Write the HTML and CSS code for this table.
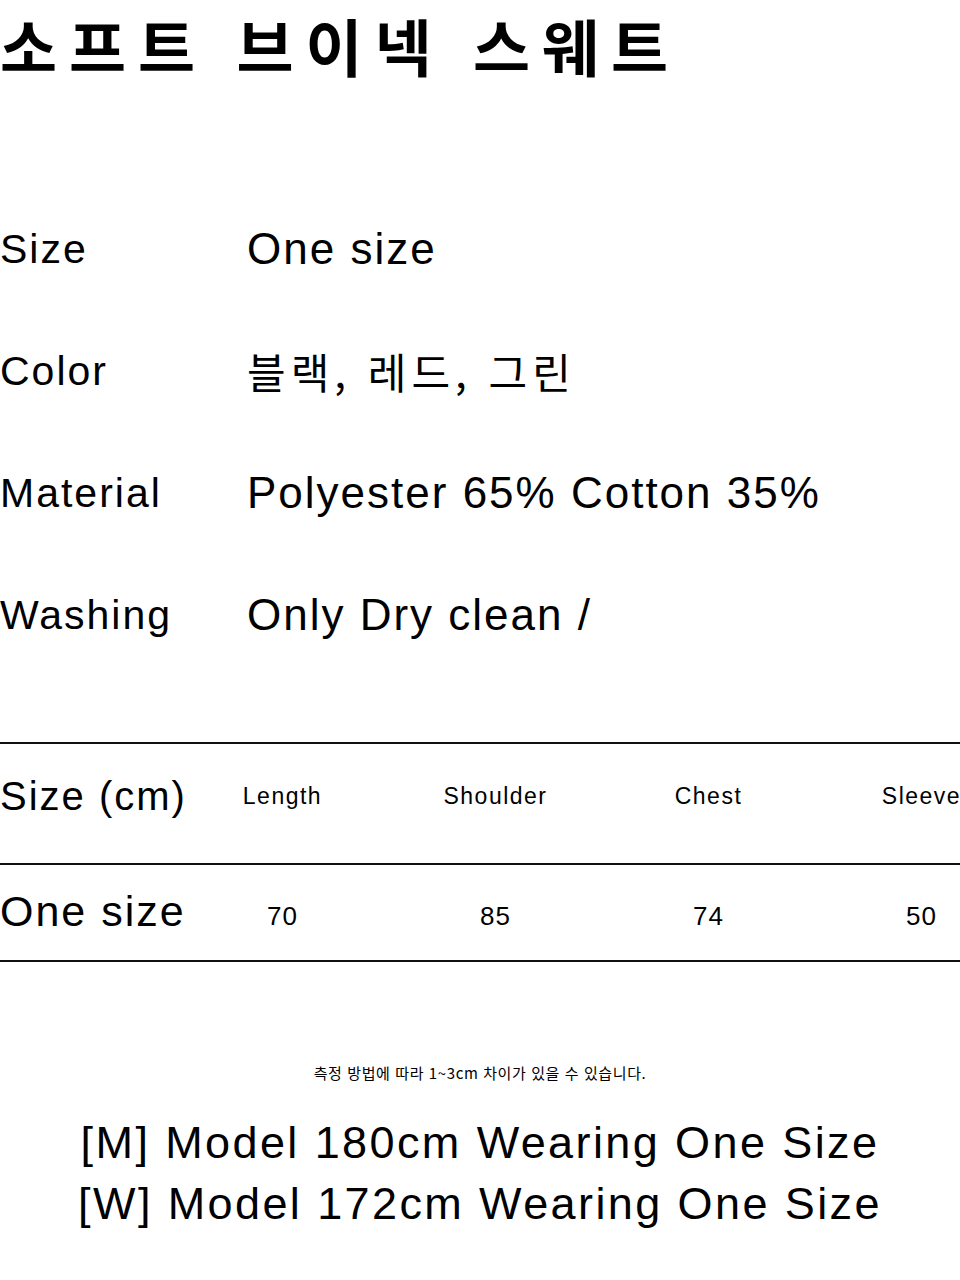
FILE: index.html
```html
<!DOCTYPE html>
<html lang="ko">
<head>
<meta charset="utf-8">
<title>소프트 브이넥 스웨트</title>
<link rel="stylesheet" href="styles.css">
</head>
<body>
<main class="page">
  <h1 class="title">소프트 브이넥 스웨트</h1>

  <dl class="specs">
    <div class="spec-row"><dt>Size</dt><dd>One size</dd></div>
    <div class="spec-row"><dt>Color</dt><dd class="ko">블랙, 레드, 그린</dd></div>
    <div class="spec-row"><dt>Material</dt><dd>Polyester 65% Cotton 35%</dd></div>
    <div class="spec-row"><dt>Washing</dt><dd>Only Dry clean /</dd></div>
  </dl>

  <div class="size-table">
    <div class="size-row size-head">
      <div class="cell-label">Size (cm)</div>
      <div class="cell">Length</div>
      <div class="cell">Shoulder</div>
      <div class="cell">Chest</div>
      <div class="cell">Sleeve</div>
    </div>
    <div class="size-row size-data">
      <div class="cell-label">One size</div>
      <div class="cell">70</div>
      <div class="cell">85</div>
      <div class="cell">74</div>
      <div class="cell">50</div>
    </div>
  </div>

  <p class="note">측정 방법에 따라 1~3cm 차이가 있을 수 있습니다.</p>

  <div class="models">
    <p class="model-line">[M] Model 180cm Wearing One Size</p>
    <p class="model-line">[W] Model 172cm Wearing One Size</p>
  </div>
</main>
</body>
</html>
```

FILE: styles.css
```css
html, body {
  margin: 0;
  padding: 0;
  background: #fff;
}

body {
  width: 960px;
  overflow-x: hidden;
  color: #000;
  font-family: "Liberation Sans", "Noto Sans CJK KR", sans-serif;
}

.page {
  display: flex;
  flex-direction: column;
}

.title {
  margin: 0;
  height: 90px;
  line-height: 90px;
  font-family: "Noto Sans CJK KR", sans-serif;
  font-weight: 700;
  font-size: 62px;
  letter-spacing: 12px;
  white-space: nowrap;
}

.specs {
  margin: 134px 0 0;
  display: flex;
  flex-direction: column;
  gap: 72px;
}

.spec-row {
  display: grid;
  grid-template-columns: 247px 1fr;
  height: 50px;
  align-items: center;
}

.spec-row dt {
  font-size: 41px;
  letter-spacing: 2px;
  line-height: 50px;
}

.spec-row dd {
  margin: 0;
  font-size: 44px;
  letter-spacing: 2px;
  line-height: 50px;
  white-space: nowrap;
}

.spec-row dd.ko {
  font-family: "Noto Sans CJK KR", sans-serif;
  font-size: 42px;
  letter-spacing: 5px;
}

.size-table {
  margin-top: 102px;
  width: 960px;
  overflow: hidden;
  border-top: 2px solid #111;
}

.size-row {
  display: grid;
  grid-template-columns: 176px repeat(4, 213px);
  align-items: center;
  border-bottom: 2px solid #111;
  width: 1028px;
}

.size-head {
  height: 121px;
  padding-bottom: 14px;
  box-sizing: border-box;
}

.size-data {
  height: 97px;
  padding-bottom: 2px;
  box-sizing: border-box;
}

.cell-label {
  font-size: 40px;
  letter-spacing: 2px;
  white-space: nowrap;
}

.size-data .cell-label {
  font-size: 43px;
}

.cell {
  text-align: center;
  white-space: nowrap;
}

.size-head .cell {
  font-size: 23px;
  letter-spacing: 1.5px;
}

.size-data .cell {
  font-size: 26px;
  letter-spacing: 1px;
  padding-top: 9px;
}

.note {
  margin: 101px 0 0;
  text-align: center;
  font-family: "Noto Sans CJK KR", sans-serif;
  font-size: 15px;
  line-height: 20px;
  letter-spacing: 0.6px;
}

.models {
  margin-top: 29px;
  display: flex;
  flex-direction: column;
  align-items: center;
}

.model-line {
  margin: 0;
  font-size: 45px;
  letter-spacing: 2.4px;
  line-height: 61px;
  white-space: nowrap;
}
```
